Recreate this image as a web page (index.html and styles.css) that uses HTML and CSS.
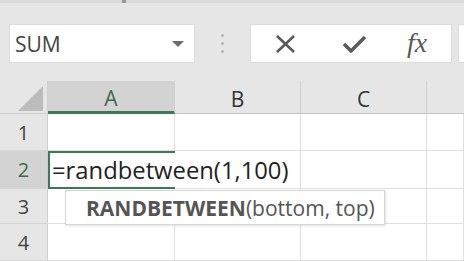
FILE: index.html
```html
<!DOCTYPE html>
<html lang="en">
<head>
  <meta charset="UTF-8" />
  <title>RANDBETWEEN</title>
  <link rel="stylesheet" href="styles.css">
</head>
<body>
  <div class="app">
    <div class="topstrip"><span class="grip"></span></div>

    <div class="toolbar">
      <div class="namebox">
        <span class="name">SUM</span>
        <svg class="caret" width="12" height="6" viewBox="0 0 12 6"><path d="M0 0h12L6 6z" fill="#6b6b6b"/></svg>
      </div>
      <div class="dots"><i></i><i></i><i></i></div>
      <div class="fbox">
        <svg class="ico x" width="21" height="20" viewBox="0 0 21 20"><path d="M2 2l17 16M19 2L2 18" stroke="#5a5a5a" stroke-width="2.6" fill="none"/></svg>
        <svg class="ico ok" width="25" height="20" viewBox="0 0 25 20"><path d="M2 10l7 7L23 3" stroke="#5a5a5a" stroke-width="3.6" fill="none" stroke-linejoin="round"/></svg>
        <span class="fx">fx</span>
      </div>
      <div class="fbox rest"></div>
    </div>

    <div class="sheet">
      <div class="corner"><span class="tri"></span></div>
      <div class="colhead sel">A</div>
      <div class="colhead">B</div>
      <div class="colhead">C</div>
      <div class="colhead last"></div>

      <div class="rowhead">1</div>
      <div class="cell"></div><div class="cell"></div><div class="cell"></div><div class="cell"></div>

      <div class="rowhead sel">2</div>
      <div class="cell active">=randbetween(1,100)</div><div class="cell"></div><div class="cell"></div><div class="cell"></div>

      <div class="rowhead">3</div>
      <div class="cell"></div><div class="cell"></div><div class="cell"></div><div class="cell"></div>

      <div class="rowhead">4</div>
      <div class="cell"></div><div class="cell"></div><div class="cell"></div><div class="cell"></div>

      <div class="tip"><b>RANDBETWEEN</b>(bottom, top)</div>
    </div>
  </div>
</body>
</html>
```

FILE: styles.css
```css
body {
  margin: 0;
  font-family: "Open Sans", "Noto Sans", sans-serif;
  background: #e6e6e6;
  overflow: hidden;
}

.app {
  width: 464px;
  height: 261px;
  background: #e6e6e6;
  overflow: hidden;
}

.topstrip {
  height: 3px;
  background: #dadada;
  position: relative;
}

.grip {
  position: absolute;
  left: 122px;
  top: 0;
  width: 4px;
  height: 3px;
  background: #9a9a9a;
}

.toolbar {
  display: flex;
  align-items: center;
  height: 39px;
  margin-top: 21px;
}

.toolbar > * {
  flex-shrink: 0;
}

.namebox {
  width: 186px;
  height: 39px;
  margin-left: 9px;
  background: #fff;
  box-sizing: border-box;
  border: 1px solid #dcdcdc;
  display: flex;
  align-items: center;
  justify-content: space-between;
  padding: 0 10px 0 5px;
}

.name {
  font-size: 21px;
  color: #444;
}

.dots {
  width: 55px;
  display: flex;
  flex-direction: column;
  align-items: center;
  gap: 5px;
}

.dots i {
  width: 3px;
  height: 3px;
  background: #b5b5b5;
  border-radius: 50%;
}

.fbox {
  width: 202px;
  height: 39px;
  background: #fff;
  box-sizing: border-box;
  border: 1px solid #dcdcdc;
  display: flex;
  align-items: center;
  padding-left: 24px;
}

.ok {
  margin-left: 46px;
}

.fx {
  margin-left: 40px;
  font-family: "Liberation Serif", serif;
  font-style: italic;
  font-size: 28px;
  color: #5a5a5a;
  line-height: 1;
  margin-top: -2px;
}

.fbox.rest {
  width: 20px;
  margin-left: 6px;
  border-right: none;
}

.sheet {
  position: relative;
  margin-top: 18px;
  display: grid;
  grid-template-columns: 48px 127px 126px 126px 37px;
  grid-template-rows: 33px 37px 38px 35px 37px;
  background: #fff;
}

.corner {
  background: #e6e6e6;
  border-right: 1px solid #cfcfcf;
  border-bottom: 1px solid #cfcfcf;
  position: relative;
}

.tri {
  position: absolute;
  right: 4px;
  bottom: 2px;
  width: 0;
  height: 0;
  border-left: 25px solid transparent;
  border-bottom: 25px solid #bcbcbc;
}

.colhead {
  background: #e6e6e6;
  border-right: 1px solid #cfcfcf;
  border-bottom: 1px solid #c6c6c6;
  display: flex;
  align-items: center;
  justify-content: center;
  font-size: 21px;
  color: #333;
  padding-top: 3px;
}

.colhead.sel {
  background: #d3d3d3;
  color: #3c6b4f;
  border-bottom: 3px solid #3b7a57;
}

.colhead.last {
  border-right: none;
}

.rowhead {
  background: #e6e6e6;
  border-right: 1px solid #cfcfcf;
  border-bottom: 1px solid #d6d6d6;
  display: flex;
  align-items: center;
  justify-content: center;
  font-size: 20px;
  color: #444;
}

.rowhead.sel {
  background: #d3d3d3;
  color: #3c6b4f;
}

.cell {
  border-right: 1px solid #e0e0e0;
  border-bottom: 1px solid #e0e0e0;
  font-size: 23.8px;
  color: #222;
  white-space: nowrap;
  display: flex;
  align-items: center;
}

.cell.active {
  border: 2px solid #3b7a57;
  border-right: none;
  padding-left: 2px;
  position: relative;
  z-index: 1;
}

.tip {
  position: absolute;
  left: 65px;
  top: 109px;
  width: 320px;
  height: 35px;
  box-sizing: border-box;
  background: #fff;
  border: 1px solid #d6d6d6;
  box-shadow: 1px 1px 2px rgba(0, 0, 0, 0.12);
  padding-left: 20px;
  display: flex;
  align-items: center;
  font-size: 21px;
  color: #555;
  z-index: 2;
  white-space: nowrap;
}

.tip b {
  font-weight: 700;
}
```
